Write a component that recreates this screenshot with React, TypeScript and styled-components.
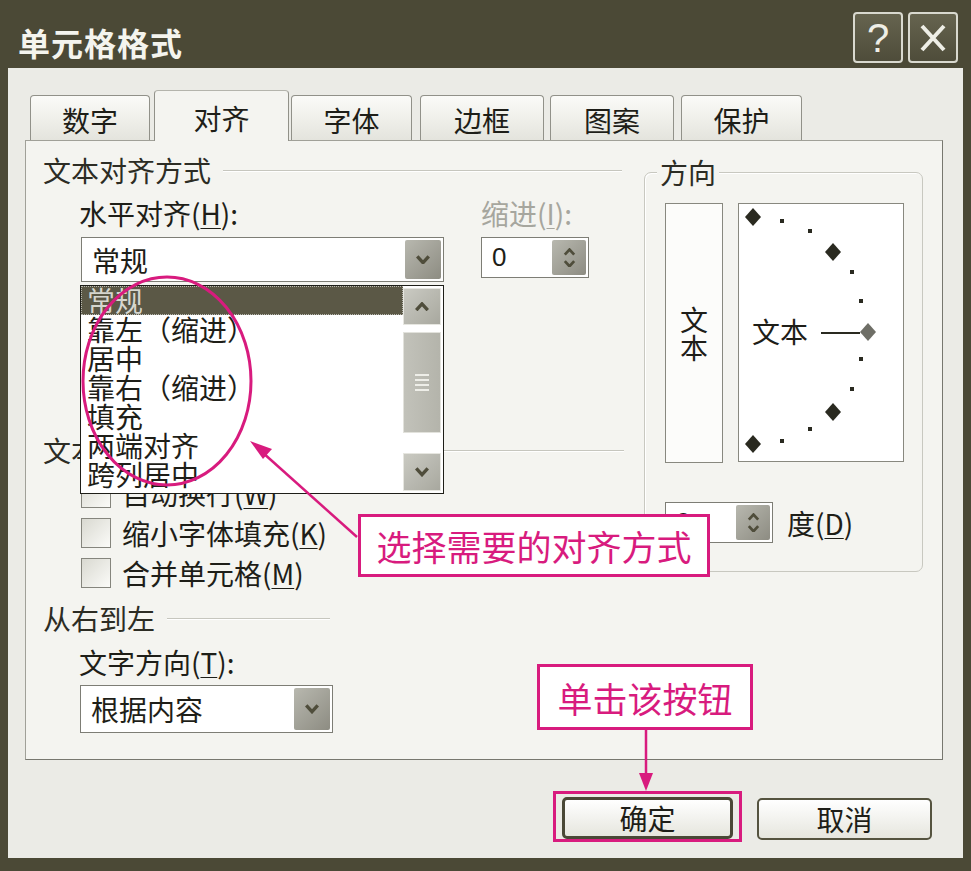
import React from 'react';
import styled, { createGlobalStyle } from 'styled-components';

const colors = {
  frame: '#4b4936',
  body: '#ebebe6',
  panel: '#f4f4f0',
  border: '#8f8f87',
  text: '#1e1e18',
  disabled: '#a6a69e',
  accent: '#d81b7e',
  select: '#5b5846',
  chevron: '#4f4d3b',
};

const GlobalStyle = createGlobalStyle`
  html, body {
    margin: 0;
    padding: 0;
    background: ${colors.frame};
  }
  body {
    font-family: "Noto Sans CJK SC", "Noto Sans", sans-serif;
  }
`;

const Window = styled.div`
  position: relative;
  width: 971px;
  height: 871px;
  box-sizing: border-box;
  background: ${colors.frame};
  display: flex;
  flex-direction: column;
  padding: 0 8px 13px 8px;
  overflow: hidden;
  font-family: "Noto Sans CJK SC", "Noto Sans", sans-serif;
  color: ${colors.text};
`;

const TitleBar = styled.div`
  height: 68px;
  flex: none;
  display: flex;
  align-items: flex-start;
  justify-content: space-between;
  padding: 0 5px 0 10px;
`;

const Title = styled.div`
  margin-top: 23px;
  font-size: 32px;
  line-height: 38px;
  font-weight: 700;
  color: #f4f4ee;
  letter-spacing: 1px;
`;

const TitleButtons = styled.div`
  display: flex;
  gap: 5px;
  margin-top: 12px;
`;

const TitleButton = styled.div`
  width: 50px;
  height: 51px;
  box-sizing: border-box;
  border: 2px solid #d9d9cf;
  border-radius: 4px;
  background: linear-gradient(#66644f, #4e4c3a);
  display: flex;
  align-items: center;
  justify-content: center;
  color: #eeeee6;
  font-family: "Liberation Sans", sans-serif;
  font-size: 40px;
  line-height: 1;
`;

const Body = styled.div`
  flex: 1;
  background: ${colors.body};
  padding: 22px 20px 0 17px;
  display: flex;
  flex-direction: column;
`;

const TabRow = styled.div`
  display: flex;
  align-items: flex-end;
  height: 51px;
  padding-left: 5px;
  margin-bottom: -1px;
  position: relative;
  z-index: 1;
`;

const Tab = styled.div<{ $active?: boolean; $w: number; $gap: number }>`
  width: ${(p) => p.$w}px;
  margin-left: ${(p) => p.$gap}px;
  height: ${(p) => (p.$active ? 51 : 45)}px;
  margin-bottom: ${(p) => (p.$active ? 0 : 1)}px;
  box-sizing: border-box;
  border: 1px solid #919189;
  border-bottom: none;
  border-radius: 4px 4px 0 0;
  background: ${(p) =>
    p.$active ? colors.panel : 'linear-gradient(#fbfbf8, #e4e4dd)'};
  border-top-color: ${(p) => (p.$active ? '#b4b4ac' : '#919189')};
  font-size: 28px;
  line-height: 30px;
  padding-top: ${(p) => (p.$active ? 12 : 9)}px;
  text-align: center;
`;

const Panel = styled.div`
  height: 620px;
  box-sizing: border-box;
  background: ${colors.panel};
  border: 1px solid #a0a098;
  border-right-color: #77776f;
  border-bottom-color: #77776f;
  display: grid;
  grid-template-columns: 582px 279px;
  column-gap: 19px;
  align-items: start;
  padding: 14px 0 0 17px;
`;

const Column = styled.div`
  display: flex;
  flex-direction: column;
`;

const GroupHeader = styled.div<{ $w: number; $mt?: number }>`
  display: flex;
  align-items: center;
  width: ${(p) => p.$w}px;
  height: 30px;
  margin-top: ${(p) => p.$mt ?? 0}px;
  font-size: 28px;
  line-height: 30px;
  color: #2c2c24;
  white-space: nowrap;

  &::after {
    content: '';
    flex: 1;
    height: 1px;
    margin-left: 12px;
    background: #c6c6be;
    box-shadow: 0 1px 0 #ffffff;
  }
`;

const FieldRow = styled.div<{ $mt: number }>`
  display: flex;
  height: 30px;
  margin-top: ${(p) => p.$mt}px;
  padding-left: 36px;
`;

const FieldLabel = styled.div<{ $w?: number; $disabled?: boolean }>`
  width: ${(p) => (p.$w ? `${p.$w}px` : 'auto')};
  font-size: 28px;
  line-height: 30px;
  color: ${(p) => (p.$disabled ? colors.disabled : colors.text)};
  white-space: nowrap;

  u {
    text-decoration-thickness: 1px;
    text-underline-offset: 3px;
  }
`;

const ControlsRow = styled.div`
  display: flex;
  align-items: flex-start;
  margin-top: 9px;
  padding-left: 38px;
`;

const Combo = styled.div<{ $w: number; $h: number; $ml?: number; $mt?: number }>`
  width: ${(p) => p.$w}px;
  height: ${(p) => p.$h}px;
  margin-left: ${(p) => p.$ml ?? 0}px;
  margin-top: ${(p) => p.$mt ?? 0}px;
  box-sizing: border-box;
  border: 1px solid #7d7d75;
  background: #ffffff;
  display: flex;
  padding: 2px;
`;

const ComboText = styled.div`
  flex: 1;
  padding-left: 8px;
  display: flex;
  align-items: center;
  font-size: 28px;
`;

const DropButton = styled.div<{ $w: number }>`
  width: ${(p) => p.$w}px;
  background: linear-gradient(135deg, #b8b8af, #8d8c82);
  border-radius: 2px;
  display: flex;
  flex-direction: column;
  align-items: center;
  justify-content: center;
  gap: 4px;
`;

const SpinText = styled.div`
  flex: 1;
  padding-left: 8px;
  display: flex;
  align-items: center;
  font-family: "Liberation Sans", sans-serif;
  font-size: 26px;
`;

const Spacer = styled.div<{ $h: number }>`
  height: ${(p) => p.$h}px;
  flex: none;
`;

const CheckRow = styled.div<{ $mt?: number }>`
  display: flex;
  align-items: center;
  height: 40px;
  margin-top: ${(p) => p.$mt ?? 0}px;
  padding-left: 38px;
  gap: 11px;
`;

const CheckBox = styled.div`
  width: 30px;
  height: 30px;
  box-sizing: border-box;
  border: 1px solid #85857d;
  background: linear-gradient(135deg, #d9d9d1, #fbfbf8);
`;

const DirBox = styled.div`
  margin-top: 17px;
  height: 400px;
  box-sizing: border-box;
  border: 1px solid #c8c8c0;
  border-radius: 7px;
  padding-left: 20px;
  display: flex;
  flex-direction: column;
  box-shadow: inset 1px 1px 0 #ffffff;
`;

const Legend = styled.div`
  align-self: flex-start;
  margin: -16px 0 0 -8px;
  padding: 0 3px;
  background: ${colors.panel};
  font-size: 28px;
  line-height: 30px;
  color: #2c2c24;
`;

const PreviewRow = styled.div`
  display: flex;
  gap: 15px;
  margin-top: 16px;
`;

const VertBox = styled.div`
  width: 58px;
  height: 260px;
  box-sizing: border-box;
  border: 1px solid #88887f;
  background: #fcfcfa;
  display: flex;
  flex-direction: column;
  align-items: center;
  justify-content: center;
  font-size: 28px;
  line-height: 28px;
`;

const ArcBox = styled.div`
  width: 166px;
  height: 259px;
  box-sizing: border-box;
  border: 1px solid #88887f;
  background: #ffffff;

  svg {
    display: block;
  }
`;

const SpinRow = styled.div`
  display: flex;
  align-items: center;
  gap: 14px;
  margin-top: 39px;
`;

const ButtonRow = styled.div`
  display: flex;
  justify-content: flex-end;
  align-items: flex-end;
  gap: 15px;
  margin-top: 31px;
  padding-right: 11px;
`;

const Highlight = styled.div`
  border: 3px solid ${colors.accent};
  padding: 3px 6px 0 6px;
`;

const Button = styled.div<{ $w: number; $default?: boolean }>`
  width: ${(p) => p.$w}px;
  height: 42px;
  box-sizing: border-box;
  border: ${(p) => (p.$default ? '3px solid #4a4836' : '2px solid #55533f')};
  border-radius: 5px;
  background: linear-gradient(#ffffff, #e6e6de);
  display: flex;
  align-items: center;
  justify-content: center;
  font-size: 28px;
  margin-bottom: ${(p) => (p.$default ? 0 : 2)}px;
`;

/* overlays */

const DropList = styled.div`
  position: absolute;
  left: 80px;
  top: 285px;
  width: 364px;
  height: 209px;
  box-sizing: border-box;
  border: 1px solid #1e1e18;
  background: #ffffff;
  display: flex;
  z-index: 5;
`;

const ItemList = styled.div`
  flex: 1;
  display: flex;
  flex-direction: column;
`;

const Item = styled.div<{ $selected?: boolean }>`
  height: 29px;
  flex: none;
  box-sizing: border-box;
  padding-left: 6px;
  font-size: 28px;
  line-height: 29px;
  white-space: nowrap;
  background: ${(p) => (p.$selected ? colors.select : 'transparent')};
  color: ${(p) => (p.$selected ? '#d6d6ce' : colors.text)};
  outline: ${(p) => (p.$selected ? '1px dotted #b8b8b0' : 'none')};
  outline-offset: -1px;
`;

const ScrollBar = styled.div`
  width: 40px;
  padding: 2px 2px 2px 0;
  box-sizing: border-box;
  display: flex;
  flex-direction: column;
`;

const ScrollButton = styled.div<{ $h: number }>`
  height: ${(p) => p.$h}px;
  background: linear-gradient(135deg, #cacac2, #a8a89f);
  border: 1px solid #e6e6e0;
  box-sizing: border-box;
  display: flex;
  align-items: center;
  justify-content: center;
`;

const Thumb = styled.div`
  height: 101px;
  margin-top: 7px;
  box-sizing: border-box;
  border: 1px solid #e2e2dc;
  background: linear-gradient(90deg, #c2c2ba, #b4b4ab);
  display: flex;
  flex-direction: column;
  align-items: center;
  justify-content: center;
  gap: 3px;

  span {
    width: 14px;
    height: 2px;
    background: #eeeee8;
  }
`;

const Track = styled.div`
  flex: 1;
`;

const Marks = styled.svg`
  position: absolute;
  left: 0;
  top: 0;
  z-index: 6;
  pointer-events: none;
`;

const Callout = styled.div<{ $x: number; $y: number; $w: number; $h: number }>`
  position: absolute;
  left: ${(p) => p.$x}px;
  top: ${(p) => p.$y}px;
  width: ${(p) => p.$w}px;
  height: ${(p) => p.$h}px;
  box-sizing: border-box;
  border: 3px solid ${colors.accent};
  background: #ffffff;
  color: ${colors.accent};
  font-size: 35px;
  display: flex;
  align-items: center;
  justify-content: center;
  z-index: 7;
`;

const Chevron: React.FC<{ up?: boolean; size?: number }> = ({ up, size = 16 }) => (
  <svg width={size} height={size * 0.6} viewBox="0 0 16 10">
    <path
      d={up ? 'M2 8.5 L8 2 L14 8.5' : 'M2 1.5 L8 8 L14 1.5'}
      stroke={colors.chevron}
      strokeWidth="3.5"
      fill="none"
    />
  </svg>
);

const tabs = [
  { label: '数字', w: 120, gap: 0 },
  { label: '对齐', w: 135, gap: 4, active: true },
  { label: '字体', w: 121, gap: 2 },
  { label: '边框', w: 124, gap: 8 },
  { label: '图案', w: 124, gap: 6 },
  { label: '保护', w: 121, gap: 7 },
];

const alignItems = ['常规', '靠左（缩进）', '居中', '靠右（缩进）', '填充', '两端对齐', '跨列居中'];

const bigDots = [
  [14, 13, false],
  [94, 48, false],
  [129, 128, true],
  [94, 208, false],
  [14, 240, false],
] as const;

const smallDots = [
  [43, 17], [71, 27], [113, 68], [122, 97],
  [122, 155], [113, 185], [71, 225], [43, 237],
];

const diamond = (x: number, y: number) =>
  `${x},${y - 9} ${x + 8},${y} ${x},${y + 9} ${x - 8},${y}`;

const App: React.FC = () => {
  return (
    <Window>
      <GlobalStyle />
      <TitleBar>
        <Title>单元格格式</Title>
        <TitleButtons>
          <TitleButton>?</TitleButton>
          <TitleButton>
            <svg width="30" height="32" viewBox="0 0 30 32">
              <path d="M4 4 L26 28 M26 4 L4 28" stroke="#eeeee6" strokeWidth="4" />
            </svg>
          </TitleButton>
        </TitleButtons>
      </TitleBar>

      <Body>
        <TabRow>
          {tabs.map((t) => (
            <Tab key={t.label} $w={t.w} $gap={t.gap} $active={t.active}>
              {t.label}
            </Tab>
          ))}
        </TabRow>

        <Panel>
          <Column>
            <GroupHeader $w={579}>文本对齐方式</GroupHeader>
            <FieldRow $mt={13}>
              <FieldLabel $w={402}>水平对齐(<u>H</u>):</FieldLabel>
              <FieldLabel $disabled>缩进(<u>I</u>):</FieldLabel>
            </FieldRow>
            <ControlsRow>
              <Combo $w={363} $h={45}>
                <ComboText>常规</ComboText>
                <DropButton $w={36}>
                  <Chevron />
                </DropButton>
              </Combo>
              <Combo $w={108} $h={41} $ml={37}>
                <SpinText>0</SpinText>
                <DropButton $w={34}>
                  <Chevron up size={13} />
                  <Chevron size={13} />
                </DropButton>
              </Combo>
            </ControlsRow>
            <Spacer $h={153} />
            <GroupHeader $w={581}>文本控制</GroupHeader>
            <CheckRow $mt={8}>
              <CheckBox />
              <FieldLabel>自动换行(<u>W</u>)</FieldLabel>
            </CheckRow>
            <CheckRow>
              <CheckBox />
              <FieldLabel>缩小字体填充(<u>K</u>)</FieldLabel>
            </CheckRow>
            <CheckRow>
              <CheckBox />
              <FieldLabel>合并单元格(<u>M</u>)</FieldLabel>
            </CheckRow>
            <GroupHeader $w={287} $mt={10}>从右到左</GroupHeader>
            <FieldRow $mt={14}>
              <FieldLabel>文字方向(<u>T</u>):</FieldLabel>
            </FieldRow>
            <Combo $w={253} $h={48} $ml={37} $mt={8}>
              <ComboText>根据内容</ComboText>
              <DropButton $w={36}>
                <Chevron />
              </DropButton>
            </Combo>
          </Column>

          <Column>
            <DirBox>
              <Legend>方向</Legend>
              <PreviewRow>
                <VertBox>
                  <span>文</span>
                  <span>本</span>
                </VertBox>
                <ArcBox>
                  <svg width="164" height="257" viewBox="0 0 164 257">
                    {smallDots.map(([x, y]) => (
                      <rect key={`${x}-${y}`} x={x - 2} y={y - 2} width="4" height="4" fill="#2a2a20" />
                    ))}
                    {bigDots.map(([x, y, sel]) => (
                      <polygon key={`${x}-${y}`} points={diamond(x, y)} fill={sel ? '#6e6e66' : '#2a2a20'} />
                    ))}
                    <line x1="82" y1="129" x2="121" y2="129" stroke="#2a2a20" strokeWidth="2" />
                    <text
                      x="41"
                      y="139"
                      textAnchor="middle"
                      fontSize="28"
                      fill="#1e1e18"
                      fontFamily='"Noto Sans CJK SC", sans-serif'
                    >
                      文本
                    </text>
                  </svg>
                </ArcBox>
              </PreviewRow>
              <SpinRow>
                <Combo $w={108} $h={41}>
                  <SpinText>0</SpinText>
                  <DropButton $w={34}>
                    <Chevron up size={13} />
                    <Chevron size={13} />
                  </DropButton>
                </Combo>
                <FieldLabel>度(<u>D</u>)</FieldLabel>
              </SpinRow>
            </DirBox>
          </Column>
        </Panel>

        <ButtonRow>
          <Highlight>
            <Button $w={171} $default>确定</Button>
          </Highlight>
          <Button $w={175}>取消</Button>
        </ButtonRow>
      </Body>

      <DropList>
        <ItemList>
          {alignItems.map((label, i) => (
            <Item key={label} $selected={i === 0}>
              {label}
            </Item>
          ))}
        </ItemList>
        <ScrollBar>
          <ScrollButton $h={37}>
            <Chevron up />
          </ScrollButton>
          <Thumb>
            <span />
            <span />
            <span />
            <span />
          </Thumb>
          <Track />
          <ScrollButton $h={38}>
            <Chevron />
          </ScrollButton>
        </ScrollBar>
      </DropList>

      <Marks width="971" height="871" viewBox="0 0 971 871">
        <ellipse cx="167" cy="381" rx="84" ry="104" fill="none" stroke={colors.accent} strokeWidth="3" />
        <line x1="357" y1="537" x2="262" y2="452" stroke={colors.accent} strokeWidth="2.5" />
        <polygon points="250,441 272,449 263,459" fill={colors.accent} />
        <line x1="646" y1="730" x2="646" y2="775" stroke={colors.accent} strokeWidth="2.5" />
        <polygon points="646,791 639,773 653,773" fill={colors.accent} />
      </Marks>

      <Callout $x={358} $y={514} $w={352} $h={63}>选择需要的对齐方式</Callout>
      <Callout $x={537} $y={664} $w={216} $h={66}>单击该按钮</Callout>
    </Window>
  );
};

export default App;
